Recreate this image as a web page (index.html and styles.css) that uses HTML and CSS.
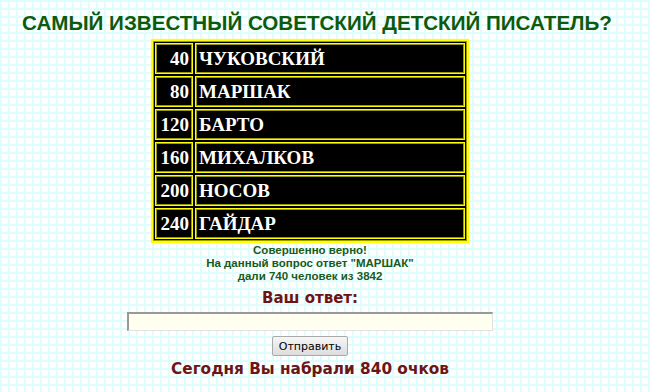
FILE: index.html
```html
<!DOCTYPE html>
<html lang="ru">
<head>
    <meta charset="UTF-8">
    <title>Викторина</title>
    <link rel="stylesheet" href="styles.css">
</head>
<body>
    <h1 class="question">САМЫЙ ИЗВЕСТНЫЙ СОВЕТСКИЙ ДЕТСКИЙ ПИСАТЕЛЬ?</h1>

    <div class="page">
        <table class="answers">
            <tr><td class="score">40</td><td class="name">ЧУКОВСКИЙ</td></tr>
            <tr><td class="score">80</td><td class="name">МАРШАК</td></tr>
            <tr><td class="score">120</td><td class="name">БАРТО</td></tr>
            <tr><td class="score">160</td><td class="name">МИХАЛКОВ</td></tr>
            <tr><td class="score">200</td><td class="name">НОСОВ</td></tr>
            <tr><td class="score">240</td><td class="name">ГАЙДАР</td></tr>
        </table>

        <div class="result">
            Совершенно верно!<br>
            На данный вопрос ответ "МАРШАК"<br>
            дали 740 человек из 3842
        </div>

        <form class="answer-form" onsubmit="return false;">
            <label class="answer-label" for="answer">Ваш ответ:</label>
            <input id="answer" class="answer-input" type="text">
            <button class="send-btn" type="submit">Отправить</button>
        </form>

        <div class="total">Сегодня Вы набрали 840 очков</div>
    </div>
</body>
</html>
```

FILE: styles.css
```css
body {
    margin: 0;
    padding: 0;
    background-color: #ffffff;
    background-image:
        linear-gradient(to right, #e0fdfd 2px, transparent 2px),
        linear-gradient(to bottom, #e0fdfd 2px, transparent 2px);
    background-size: 8px 8px;
    font-family: 'Liberation Sans', Arial, sans-serif;
}
.question {
    width: 634px;
    margin: 0;
    padding-top: 11px;
    text-align: center;
    font-size: 20.6px;
    line-height: 23px;
    font-weight: bold;
    color: #0d5a0d;
}
.page {
    width: 620px;
    display: flex;
    flex-direction: column;
    align-items: center;
}
.answers {
    margin-top: 5px;
    width: 318px;
    background: #000;
    border: 2px solid #ffff00;
    box-shadow: inset 0 0 0 1px #999900, 0 0 1px #ffff66;
    border-spacing: 2px;
    font-family: 'Liberation Serif', 'Times New Roman', serif;
    font-weight: bold;
    font-size: 19px;
    color: #fff;
}
.answers td {
    height: 27px;
    padding: 1px 3px;
    border: 1px solid #ffff00;
    box-shadow: inset 0 0 0 1px #999900;
    line-height: 22px;
}
.score {
    width: 30px;
    text-align: right;
}
.name {
    text-align: left;
}
.result {
    margin-top: 1px;
    text-align: center;
    font-size: 11.5px;
    line-height: 13px;
    font-weight: bold;
    color: #1a5a1a;
}
.answer-form {
    margin: 0;
    display: flex;
    flex-direction: column;
    align-items: center;
}
.answer-label {
    margin-top: 6px;
    font-family: 'DejaVu Sans', Verdana, sans-serif;
    font-size: 15px;
    line-height: 18px;
    font-weight: bold;
    color: #6e1414;
}
.answer-input {
    margin-top: 5px;
    width: 366px;
    height: 19px;
    box-sizing: border-box;
    background: #fffff0;
    border-style: solid;
    border-width: 2px 1px 1px 2px;
    border-color: #999999 #e2e2e2 #e2e2e2 #999999;
}
.send-btn {
    margin-top: 5px;
    padding: 1px 6px;
    height: 20px;
    font-family: 'DejaVu Sans', Verdana, sans-serif;
    font-size: 11px;
    color: #000;
    background: linear-gradient(#f6f6f6, #dddddd);
    border: 1px solid #aaaaaa;
    border-radius: 2px;
}
.total {
    margin-top: 3px;
    font-family: 'DejaVu Sans', Verdana, sans-serif;
    font-size: 15.3px;
    line-height: 20px;
    font-weight: bold;
    color: #6e1414;
}
```
